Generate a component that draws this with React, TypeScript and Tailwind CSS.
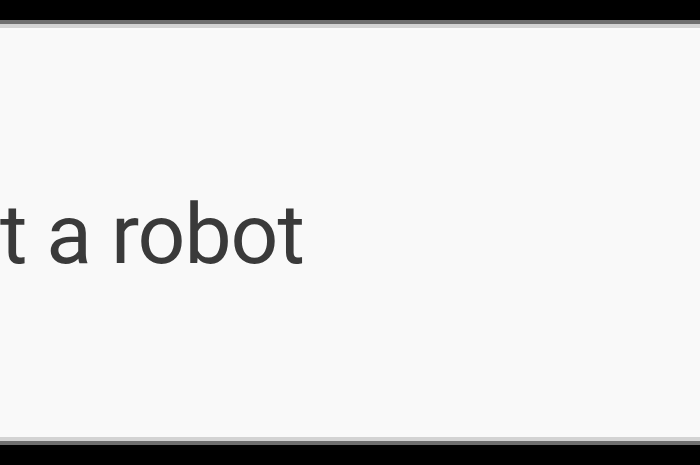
export default function App() {
  return (
    <div className="h-[465px] w-[700px] overflow-hidden bg-black">
      <div className="mt-5 border-y-4 border-[#6f6f6f]">
        <div className="h-[417px] border-y-4 border-[#d3d3d3] bg-[#f9f9f9]">
          <div className="flex w-[304px] justify-end pt-[165px]">
            <span
              className="whitespace-nowrap text-[84px] leading-none tracking-[-1px] text-[#3a3a3a]"
              style={{ fontFamily: 'Roboto, "Liberation Sans", sans-serif' }}
            >
              I'm not a robot
            </span>
          </div>
        </div>
      </div>
    </div>
  );
}
